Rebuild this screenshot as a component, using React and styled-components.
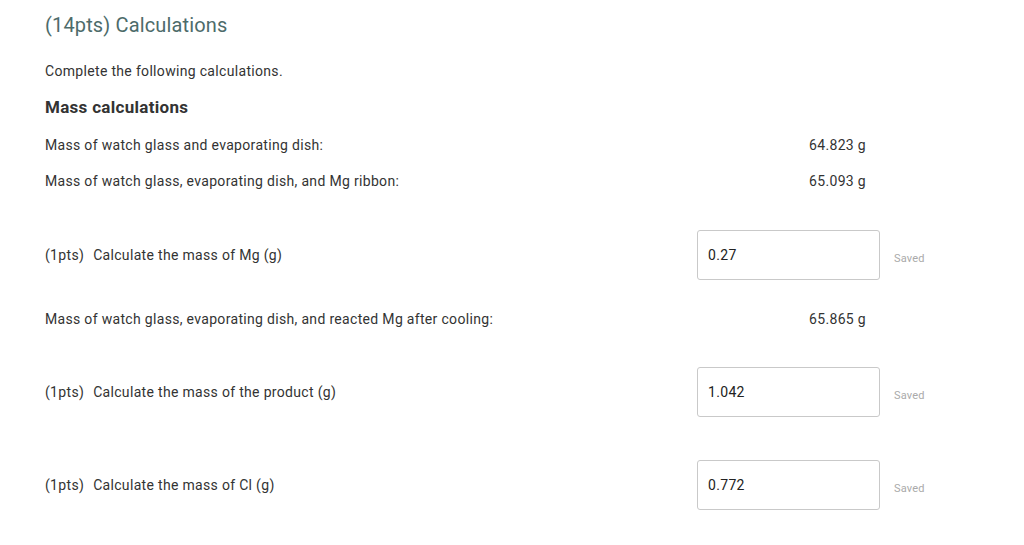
import React from "react";
import styled, { createGlobalStyle } from "styled-components";

const GlobalStyle = createGlobalStyle`
  body {
    margin: 0;
    background: #fff;
    font-family: Roboto, "Liberation Sans", sans-serif;
    color: #333;
  }
`;

const Page = styled.div`
  padding: 12px 45px 0 45px;
  width: 1024px;
  box-sizing: border-box;
`;

const Title = styled.h1`
  margin: 0;
  font-size: 20px;
  font-weight: 400;
  color: #4d6b6a;
  line-height: 26px;
  letter-spacing: 0.15px;
`;

const Intro = styled.p`
  margin: 24px 0 0;
  font-size: 14px;
  line-height: 18px;
  letter-spacing: 0.32px;
  color: #333;
`;

const Heading = styled.h2`
  margin: 17px 0 0;
  font-size: 17px;
  font-weight: 700;
  line-height: 20px;
  letter-spacing: 0.3px;
  color: #333;
`;

const Row = styled.div`
  display: grid;
  grid-template-columns: 652px 183px 60px;
  align-items: center;
  height: ${(p) => p.$h}px;
  margin-top: ${(p) => p.$mt}px;
  font-size: 14px;
  letter-spacing: 0.32px;
  color: #333;
`;

const Label = styled.div`
  display: flex;
  gap: 9px;
`;

const Value = styled.div`
  text-align: right;
  padding-right: 14px;
`;

const Input = styled.input`
  box-sizing: border-box;
  width: 183px;
  height: 50px;
  border: 1px solid #c9c9c9;
  border-radius: 3px;
  padding: 0 10px;
  font-family: Roboto, "Liberation Sans", sans-serif;
  font-size: 14px;
  letter-spacing: 0.32px;
  color: #222;
  outline: none;
`;

const Saved = styled.span`
  font-size: 11px;
  letter-spacing: 0.2px;
  color: #aaa;
  padding-left: 14px;
  margin-top: 7px;
`;

const staticRow = (label, value, mt) => (
  <Row $h={36} $mt={mt}>
    <Label>{label}</Label>
    <Value>{value}</Value>
  </Row>
);

const inputRow = (label, value, mt) => (
  <Row $h={50} $mt={mt}>
    <Label>
      <span>(1pts)</span>
      <span>{label}</span>
    </Label>
    <Input defaultValue={value} />
    <Saved>Saved</Saved>
  </Row>
);

export default function App() {
  return (
    <>
      <GlobalStyle />
      <Page>
        <Title>(14pts) Calculations</Title>
        <Intro>Complete the following calculations.</Intro>
        <Heading>Mass calculations</Heading>
        {staticRow("Mass of watch glass and evaporating dish:", "64.823 g", 10)}
        {staticRow("Mass of watch glass, evaporating dish, and Mg ribbon:", "65.093 g", 0)}
        {inputRow("Calculate the mass of Mg (g)", "0.27", 31)}
        {staticRow("Mass of watch glass, evaporating dish, and reacted Mg after cooling:", "65.865 g", 21)}
        {inputRow("Calculate the mass of the product (g)", "1.042", 30)}
        {inputRow("Calculate the mass of Cl (g)", "0.772", 43)}
      </Page>
    </>
  );
}
